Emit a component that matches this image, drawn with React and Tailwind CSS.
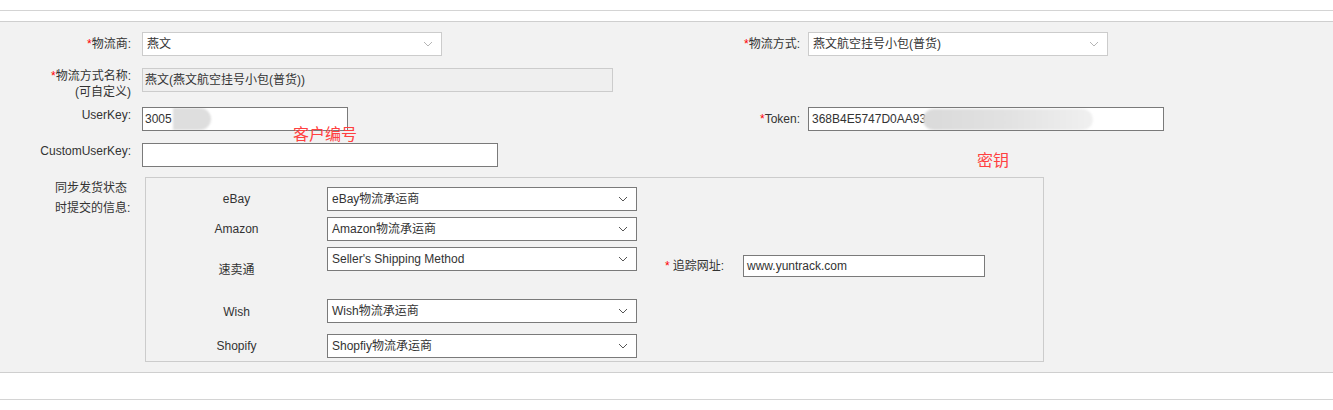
import React from 'react';

const font = { fontFamily: '"Liberation Sans", Arial, "Noto Sans CJK SC", sans-serif' };

const Chevron = ({ light }) => (
  <svg width="10" height="6" viewBox="0 0 10 6" className="absolute right-[8px] top-1/2 -translate-y-1/2">
    <polyline points="1,1 5,5 9,1" fill="none" stroke={light ? '#b5b5b5' : '#555'} strokeWidth="1" />
  </svg>
);

const Select = ({ value, light, className }) => (
  <div
    className={`relative h-[24px] bg-white flex items-center pl-[4px] ${
      light ? 'border border-[#cccccc]' : 'border border-[#7a7a7a]'
    } ${className}`}
  >
    <span className="text-[12px] text-[#333]">{value}</span>
    <Chevron light={light} />
  </div>
);

const Star = () => <span className="text-[#ff0000]">*</span>;

const platforms = [
  { name: 'eBay', value: 'eBay物流承运商', row: 'h-[24px]', mt: 'mt-[9px]' },
  { name: 'Amazon', value: 'Amazon物流承运商', row: 'h-[24px]', mt: 'mt-[6px]' },
  { name: '速卖通', value: "Seller's Shipping Method", row: 'h-[46px]', mt: 'mt-[6px]' },
  { name: 'Wish', value: 'Wish物流承运商', row: 'h-[26px]', mt: 'mt-[6px]' },
  { name: 'Shopify', value: 'Shopfiy物流承运商', row: 'h-[24px]', mt: 'mt-[9px]' },
];

export default function App() {
  return (
    <div className="w-[1333px] h-[410px] bg-white text-[12px] text-[#333]" style={font}>
      <div className="h-[11px] border-b border-[#d4d4d4]" />
      <div className="h-[10px]" />
      <div className="relative h-[352px] border-y border-[#cfcfcf] bg-[#f2f2f2] pt-[10px]">
        {/* row 1 */}
        <div className="flex h-[24px]">
          <div className="w-[134px] pr-[3px] text-right leading-[24px]">
            <Star />物流商:
          </div>
          <Select light value="燕文" className="ml-[8px] w-[300px]" />
          <div className="w-[361px] pr-[3px] text-right leading-[24px]">
            <Star />物流方式:
          </div>
          <Select light value="燕文航空挂号小包(普货)" className="ml-[5px] w-[300px]" />
        </div>

        {/* row 2 */}
        <div className="flex h-[39px] mt-[12px]">
          <div className="w-[134px] pr-[3px] text-right leading-[16px]">
            <div>
              <Star />物流方式名称:
            </div>
            <div>(可自定义)</div>
          </div>
          <div className="ml-[8px] w-[471px] h-[24px] border border-[#cccccc] bg-[#efefef] flex items-center pl-[2px]">
            燕文(燕文航空挂号小包(普货))
          </div>
        </div>

        {/* row 3 */}
        <div className="flex h-[24px]">
          <div className="w-[134px] pr-[3px] text-right leading-[16px]">UserKey:</div>
          <div className="relative ml-[8px] w-[206px] h-[24px] border border-[#7a7a7a] bg-white flex items-center pl-[2px] overflow-hidden">
            <span>3005</span>
            <div className="absolute left-[30px] top-0 w-[38px] h-[22px] rounded-r-full bg-[#dedede] blur-[1px]" />
          </div>
          <div className="w-[455px] pr-[3px] text-right leading-[24px]">
            <Star />Token:
          </div>
          <div className="relative ml-[5px] w-[356px] h-[24px] border border-[#7a7a7a] bg-white flex items-center pl-[3px] overflow-hidden">
            <span>368B4E5747D0AA93</span>
            <div className="absolute left-[114px] top-[1px] w-[170px] h-[21px] rounded-full bg-gradient-to-r from-[#dadada] via-[#e2e2e2] to-[#f0f0f0] blur-[1px]" />
          </div>
        </div>

        {/* row 4 */}
        <div className="flex h-[24px] mt-[12px]">
          <div className="w-[134px] pr-[3px] text-right leading-[16px]">CustomUserKey:</div>
          <div className="ml-[8px] w-[356px] h-[24px] border border-[#7a7a7a] bg-white" />
        </div>

        {/* row 5 */}
        <div className="flex mt-[10px]">
          <div className="w-[145px] pl-[55px] pt-[1px] leading-[20px]">
            <div>同步发货状态</div>
            <div>时提交的信息:</div>
          </div>
          <div className="w-[899px] h-[185px] border border-[#cccccc] flex">
            <div className="flex flex-col">
              {platforms.map((p) => (
                <div key={p.name} className={`flex ${p.row} ${p.mt}`}>
                  <div className="w-[181px] flex items-center justify-center">{p.name}</div>
                  <Select value={p.value} className="w-[310px]" />
                </div>
              ))}
            </div>
            <div className="flex items-center pb-[8px] pl-[28px]">
              <span className="text-[#ff0000]">*</span>
              <span className="ml-[3px]">追踪网址:</span>
              <div className="ml-[19px] w-[242px] h-[22px] border border-[#7a7a7a] bg-white flex items-center pl-[3px]">
                www.yuntrack.com
              </div>
            </div>
          </div>
        </div>

        <div className="absolute left-[293px] top-[105px] text-[16px] leading-[16px] text-[#ff4040]">客户编号</div>
        <div className="absolute left-[977px] top-[131px] text-[16px] leading-[16px] text-[#ff4040]">密钥</div>
      </div>
      <div className="h-[27px] border-b border-[#d4d4d4]" />
    </div>
  );
}
